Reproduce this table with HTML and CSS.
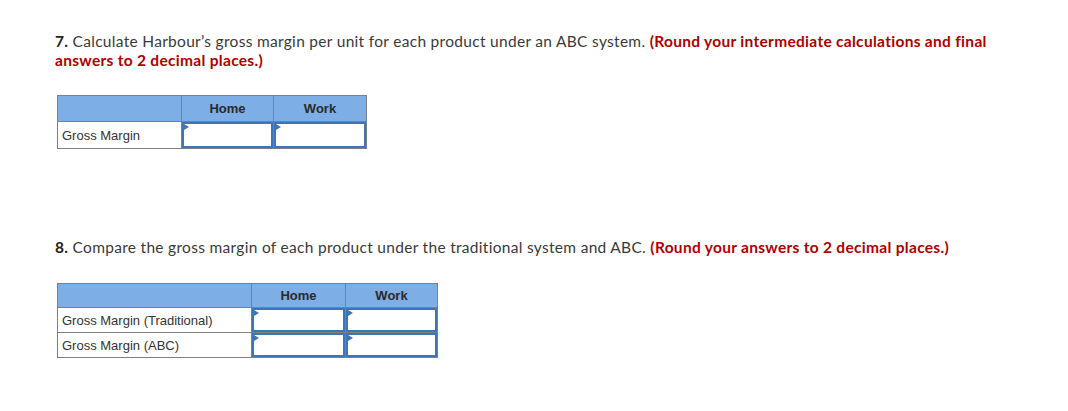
FILE: index.html
```html
<!DOCTYPE html>
<html>
<head>
<meta charset="utf-8">
<link rel="stylesheet" href="styles.css">
</head>
<body>
<div class="page">
  <section class="q q7">
    <p class="prompt"><b class="num">7.</b> Calculate Harbour’s gross margin per unit for each product under an ABC system. <span class="note">(Round your intermediate calculations and final</span> <span class="note">answers to 2 decimal places.)</span></p>
    <table class="grid t1">
      <tr class="head"><th class="lbl"></th><th>Home</th><th>Work</th></tr>
      <tr><td class="lbl">Gross Margin</td><td class="inp"><span class="mark"></span></td><td class="inp"><span class="mark"></span></td></tr>
    </table>
  </section>
  <section class="q q8">
    <p class="prompt"><b class="num">8.</b> Compare the gross margin of each product under the traditional system and ABC. <span class="note">(Round your answers to 2 decimal places.)</span></p>
    <table class="grid t2">
      <tr class="head"><th class="lbl"></th><th>Home</th><th>Work</th></tr>
      <tr><td class="lbl">Gross Margin (Traditional)</td><td class="inp"><span class="mark"></span></td><td class="inp"><span class="mark"></span></td></tr>
      <tr><td class="lbl">Gross Margin (ABC)</td><td class="inp"><span class="mark"></span></td><td class="inp"><span class="mark"></span></td></tr>
    </table>
  </section>
</div>
</body>
</html>
```
FILE: styles.css
```css
html, body { margin: 0; padding: 0; background: #fff; }
.page { padding: 32px 0 0 55px; }
.prompt {
  margin: 0;
  width: 945px;
  font-family: Lato, "Open Sans", sans-serif;
  font-size: 15.5px;
  letter-spacing: 0.3px;
  line-height: 19px;
  color: #3a3a3a;
}
.num { font-weight: 700; color: #222; }
.note { font-weight: 700; color: #b00000; }
.grid {
  border-collapse: collapse;
  margin-left: 2px;
  font-family: "Liberation Sans", Arial, sans-serif;
  font-size: 13px;
  color: #333;
}
.grid th, .grid td { border: 1px solid #7f7f7f; padding: 0; }
.grid .head th { background: #7eaee6; font-weight: 700; color: #2a2a2a; text-align: center; }
.grid td.lbl { text-align: left; padding-left: 4px; background: #fff; }
.grid td.inp { position: relative; box-shadow: inset 0 0 0 2px #3d74ba; }
.mark {
  position: absolute; left: 2px; top: 2px;
  width: 0; height: 0;
  border-top: 3px solid transparent;
  border-bottom: 3px solid transparent;
  border-left: 5px solid #3d74ba;
}
.q7 .grid { margin-top: 25px; }
.t1 th.lbl, .t1 td.lbl { width: 119px; }
.t1 th:nth-child(2) { width: 91px; }
.t1 th:nth-child(3) { width: 92px; }
.t1 .head th { height: 25px; }
.t1 td { height: 26px; }
.q8 { margin-top: 89px; }
.t2 { margin-top: 26px; }
.t2 th.lbl, .t2 td.lbl { width: 189px; }
.t2 th:nth-child(2) { width: 93px; }
.t2 th:nth-child(3) { width: 91px; }
.t2 .head th { height: 23px; }
.t2 td { height: 24px; }
```
